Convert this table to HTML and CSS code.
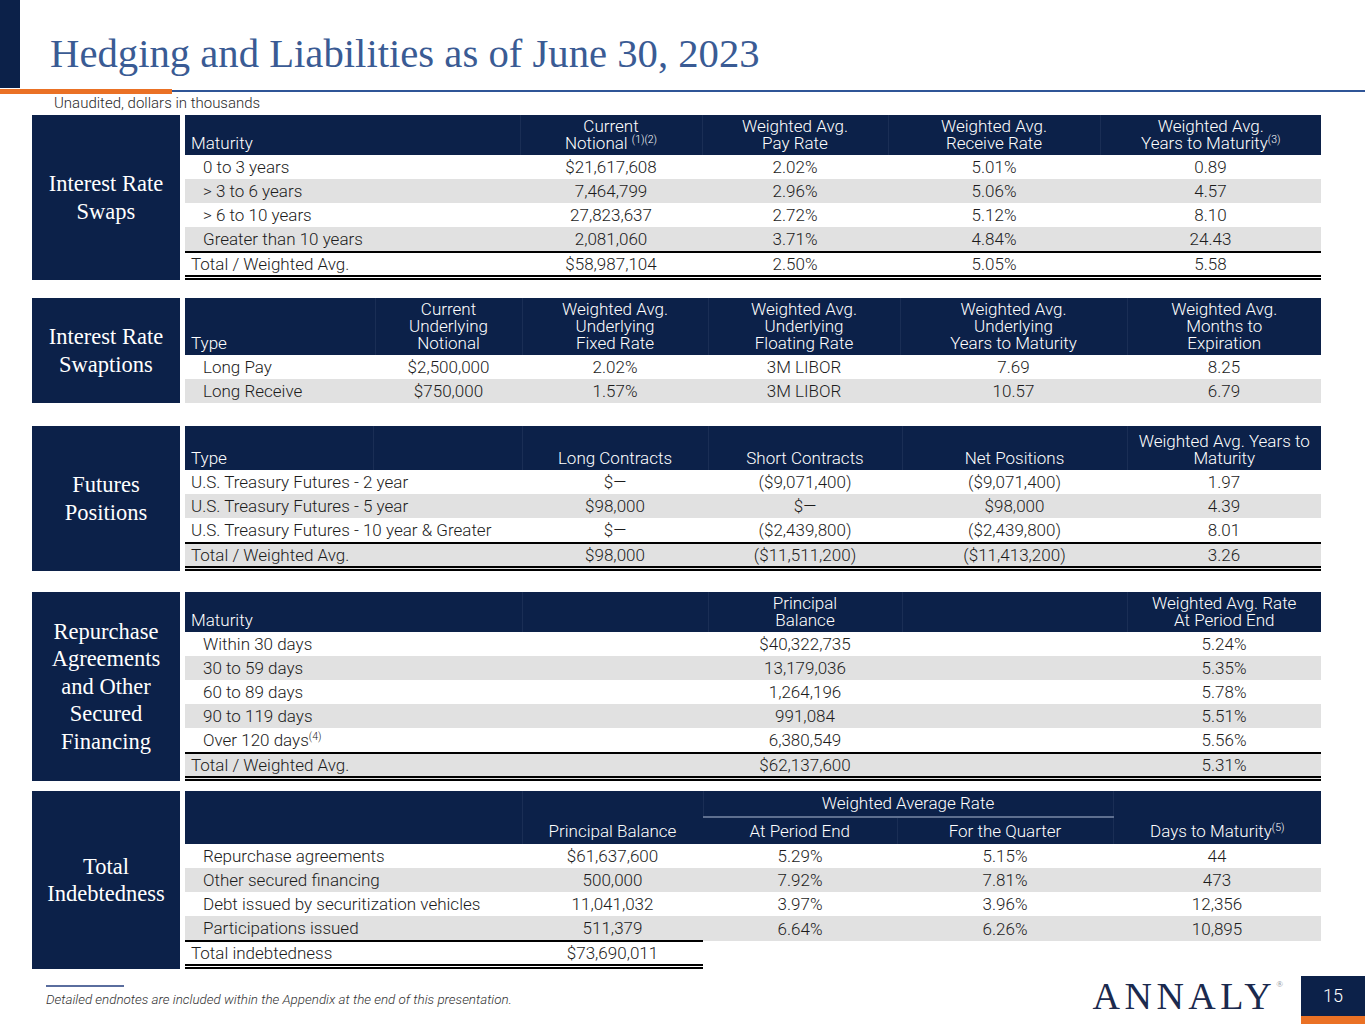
FILE: index.html
```html
<!DOCTYPE html>
<html lang="en">
<head>
<meta charset="utf-8">
<title>Hedging and Liabilities as of June 30, 2023</title>
<link rel="stylesheet" href="styles.css">
</head>
<body>
<div class="slide">
  <header class="top">
    <div class="bar"></div>
    <h1 class="title">Hedging and Liabilities as of June 30, 2023</h1>
  </header>
  <div class="rule"><span class="rule-orange"></span><span class="rule-blue"></span></div>
  <p class="sub">Unaudited, dollars in thousands</p>

  <section class="sec sec1">
    <div class="label">Interest Rate<br>Swaps</div>
    <table class="tbl t1">
      <colgroup><col style="width:335px"><col style="width:182px"><col style="width:186px"><col style="width:212px"><col style="width:221px"></colgroup>
      <thead>
        <tr><th class="l">Maturity</th><th>Current<br>Notional <sup>(1)(2)</sup></th><th>Weighted Avg.<br>Pay Rate</th><th>Weighted Avg.<br>Receive Rate</th><th>Weighted Avg.<br>Years to Maturity<sup>(3)</sup></th></tr>
      </thead>
      <tbody>
        <tr><td class="ind">0 to 3 years</td><td>$21,617,608</td><td>2.02%</td><td>5.01%</td><td>0.89</td></tr>
        <tr class="g"><td class="ind">&gt; 3 to 6 years</td><td>7,464,799</td><td>2.96%</td><td>5.06%</td><td>4.57</td></tr>
        <tr><td class="ind">&gt; 6 to 10 years</td><td>27,823,637</td><td>2.72%</td><td>5.12%</td><td>8.10</td></tr>
        <tr class="g"><td class="ind">Greater than 10 years</td><td>2,081,060</td><td>3.71%</td><td>4.84%</td><td>24.43</td></tr>
        <tr class="tot"><td class="l">Total / Weighted Avg.</td><td>$58,987,104</td><td>2.50%</td><td>5.05%</td><td>5.58</td></tr>
      </tbody>
    </table>
  </section>

  <section class="sec sec2">
    <div class="label">Interest Rate<br>Swaptions</div>
    <table class="tbl t2">
      <colgroup><col style="width:190px"><col style="width:147px"><col style="width:186px"><col style="width:192px"><col style="width:227px"><col style="width:194px"></colgroup>
      <thead>
        <tr><th class="l">Type</th><th>Current<br>Underlying<br>Notional</th><th>Weighted Avg.<br>Underlying<br>Fixed Rate</th><th>Weighted Avg.<br>Underlying<br>Floating Rate</th><th>Weighted Avg.<br>Underlying<br>Years to Maturity</th><th>Weighted Avg.<br>Months to<br>Expiration</th></tr>
      </thead>
      <tbody>
        <tr><td class="ind">Long Pay</td><td>$2,500,000</td><td>2.02%</td><td>3M LIBOR</td><td>7.69</td><td>8.25</td></tr>
        <tr class="g"><td class="ind">Long Receive</td><td>$750,000</td><td>1.57%</td><td>3M LIBOR</td><td>10.57</td><td>6.79</td></tr>
      </tbody>
    </table>
  </section>

  <section class="sec sec3">
    <div class="label">Futures<br>Positions</div>
    <table class="tbl t3">
      <colgroup><col style="width:188px"><col style="width:149px"><col style="width:186px"><col style="width:194px"><col style="width:225px"><col style="width:194px"></colgroup>
      <thead>
        <tr><th class="l">Type</th><th></th><th>Long Contracts</th><th>Short Contracts</th><th>Net Positions</th><th>Weighted Avg. Years to<br>Maturity</th></tr>
      </thead>
      <tbody>
        <tr><td class="l" colspan="2">U.S. Treasury Futures - 2 year</td><td>$—</td><td>($9,071,400)</td><td>($9,071,400)</td><td>1.97</td></tr>
        <tr class="g"><td class="l" colspan="2">U.S. Treasury Futures - 5 year</td><td>$98,000</td><td>$—</td><td>$98,000</td><td>4.39</td></tr>
        <tr><td class="l" colspan="2">U.S. Treasury Futures - 10 year &amp; Greater</td><td>$—</td><td>($2,439,800)</td><td>($2,439,800)</td><td>8.01</td></tr>
        <tr class="tot g"><td class="l" colspan="2">Total / Weighted Avg.</td><td>$98,000</td><td>($11,511,200)</td><td>($11,413,200)</td><td>3.26</td></tr>
      </tbody>
    </table>
  </section>

  <section class="sec sec4">
    <div class="label">Repurchase<br>Agreements<br>and Other<br>Secured<br>Financing</div>
    <table class="tbl t4">
      <colgroup><col style="width:337px"><col style="width:186px"><col style="width:194px"><col style="width:225px"><col style="width:194px"></colgroup>
      <thead>
        <tr><th class="l">Maturity</th><th></th><th>Principal<br>Balance</th><th></th><th>Weighted Avg. Rate<br>At Period End</th></tr>
      </thead>
      <tbody>
        <tr><td class="ind" colspan="2">Within 30 days</td><td>$40,322,735</td><td></td><td>5.24%</td></tr>
        <tr class="g"><td class="ind" colspan="2">30 to 59 days</td><td>13,179,036</td><td></td><td>5.35%</td></tr>
        <tr><td class="ind" colspan="2">60 to 89 days</td><td>1,264,196</td><td></td><td>5.78%</td></tr>
        <tr class="g"><td class="ind" colspan="2">90 to 119 days</td><td>991,084</td><td></td><td>5.51%</td></tr>
        <tr><td class="ind" colspan="2">Over 120 days<sup>(4)</sup></td><td>6,380,549</td><td></td><td>5.56%</td></tr>
        <tr class="tot g"><td class="l" colspan="2">Total / Weighted Avg.</td><td>$62,137,600</td><td></td><td>5.31%</td></tr>
      </tbody>
    </table>
  </section>

  <section class="sec sec5">
    <div class="label">Total<br>Indebtedness</div>
    <table class="tbl t5">
      <colgroup><col style="width:337px"><col style="width:181px"><col style="width:194px"><col style="width:216px"><col style="width:208px"></colgroup>
      <thead>
        <tr class="h1"><th class="l" rowspan="2"></th><th rowspan="2">Principal Balance</th><th colspan="2" class="grp">Weighted Average Rate</th><th rowspan="2">Days to Maturity<sup>(5)</sup></th></tr>
        <tr class="h2"><th>At Period End</th><th>For the Quarter</th></tr>
      </thead>
      <tbody>
        <tr><td class="ind">Repurchase agreements</td><td>$61,637,600</td><td>5.29%</td><td>5.15%</td><td>44</td></tr>
        <tr class="g"><td class="ind">Other secured financing</td><td>500,000</td><td>7.92%</td><td>7.81%</td><td>473</td></tr>
        <tr><td class="ind">Debt issued by securitization vehicles</td><td>11,041,032</td><td>3.97%</td><td>3.96%</td><td>12,356</td></tr>
        <tr class="g"><td class="ind">Participations issued</td><td>511,379</td><td>6.64%</td><td>6.26%</td><td>10,895</td></tr>
        <tr class="tot part"><td class="l">Total indebtedness</td><td>$73,690,011</td><td class="none"></td><td class="none"></td><td class="none"></td></tr>
      </tbody>
    </table>
  </section>

  <footer class="foot">
    <div class="note">
      <span class="note-line"></span>
      <p class="note-text">Detailed endnotes are included within the Appendix at the end of this presentation.</p>
    </div>
    <div class="brand">
      <span class="logo">ANNALY<sup class="reg">®</sup></span>
      <div class="page"><span class="page-num">15</span><span class="page-bar"></span></div>
    </div>
  </footer>
</div>
</body>
</html>
```

FILE: styles.css
```css
html, body {
  margin: 0;
  padding: 0;
  background: #ffffff;
}

.slide {
  width: 1365px;
  height: 1024px;
  overflow: hidden;
  position: relative;
  font-family: Roboto, "Liberation Sans", sans-serif;
  font-weight: 300;
  color: #1c1c1c;
}

/* Header */
.top {
  display: flex;
  height: 88px;
}

.bar {
  width: 20px;
  height: 88px;
  background: #0c2149;
  flex: none;
}

.title {
  margin: 0 0 0 30px;
  padding-top: 31px;
  font-family: "Liberation Serif", "Times New Roman", serif;
  font-weight: 400;
  font-size: 40.7px;
  line-height: 46px;
  color: #3a5b94;
  white-space: nowrap;
}

.rule {
  display: flex;
  align-items: center;
  height: 6px;
}

.rule-orange {
  width: 172px;
  height: 5px;
  background: #ea7125;
}

.rule-blue {
  flex: 1;
  height: 2px;
  background: #2f5597;
}

.sub {
  margin: 0;
  padding-left: 54px;
  height: 21px;
  line-height: 19px;
  font-size: 15px;
  color: #2a2a2a;
}

/* Sections */
.sec {
  display: flex;
  align-items: stretch;
  gap: 5px;
  padding-left: 32px;
}

.sec2 { margin-top: 18px; }
.sec3 { margin-top: 23px; }
.sec4 { margin-top: 21px; }
.sec5 { margin-top: 10px; }

.label {
  width: 148px;
  flex: none;
  background: #0c2149;
  color: #ffffff;
  font-family: "Liberation Serif", "Times New Roman", serif;
  font-size: 22.5px;
  line-height: 27.5px;
  display: flex;
  align-items: center;
  justify-content: center;
  text-align: center;
}

.tbl {
  width: 1136px;
  table-layout: fixed;
  border-collapse: collapse;
  font-size: 17px;
}

.tbl th {
  background: #0c2149;
  color: #ffffff;
  font-weight: 300;
  font-size: 17px;
  line-height: 17px;
  vertical-align: bottom;
  text-align: center;
  padding: 0 0 3px 0;
  border-left: 1px solid #1a2e55;
  white-space: nowrap;
}

.tbl th:first-child {
  border-left: none;
}

.tbl th.l {
  text-align: left;
  padding-left: 6px;
}

.tbl sup {
  font-size: 10.5px;
  line-height: 0;
  vertical-align: 6px;
}

.t1 thead tr { height: 40px; }
.t2 thead tr { height: 57px; }
.t3 thead tr { height: 44px; }
.t4 thead tr { height: 40px; }
.t5 .h1 { height: 26px; }
.t5 .h2 { height: 27px; }

.t5 .h1 th.grp {
  vertical-align: middle;
  border-bottom: 2px solid #5e6f8f;
  padding-bottom: 0;
}

.t5 .h2 th {
  vertical-align: middle;
  padding-bottom: 0;
}

.t5 .h1 th[rowspan] {
  padding-bottom: 4px;
}

.tbl td {
  height: 24px;
  padding: 0;
  line-height: 24px;
  text-align: center;
  white-space: nowrap;
}

.tbl td.ind {
  text-align: left;
  padding-left: 18px;
}

.tbl td.l {
  text-align: left;
  padding-left: 6px;
}

.tbl tr.g td {
  background: #e1e1e1;
}

.tbl tr.tot td {
  border-top: 2px solid #000000;
  border-bottom: 5px double #000000;
  height: 22px;
  line-height: 22px;
}

.tbl tr.part td.none {
  border-top: none;
  border-bottom: none;
  background: transparent;
}

/* Footer */
.foot {
  display: flex;
  justify-content: space-between;
  align-items: flex-start;
  margin-top: 7px;
}

.note {
  padding-left: 46px;
  padding-top: 9px;
}

.note-line {
  display: block;
  width: 78px;
  height: 2px;
  background: #5a6d9e;
}

.note-text {
  margin: 5px 0 0 0;
  font-size: 13.4px;
  font-style: italic;
  line-height: 16px;
  color: #333333;
}

.brand {
  display: flex;
  align-items: flex-start;
}

.logo {
  font-family: "Liberation Serif", "Times New Roman", serif;
  font-size: 38px;
  letter-spacing: 4.5px;
  color: #1b2a4e;
  line-height: 40px;
  margin-top: 0;
  margin-right: 18px;
}

.logo .reg {
  font-size: 9px;
  vertical-align: 22px;
  line-height: 0;
  color: #8a8f99;
  letter-spacing: 0;
}

.page {
  width: 64px;
  height: 48px;
  display: flex;
  flex-direction: column;
}

.page-num {
  height: 40px;
  background: #0c2149;
  color: #ffffff;
  font-size: 18px;
  line-height: 40px;
  text-align: center;
}

.page-bar {
  height: 8px;
  background: #ea7125;
}
```
